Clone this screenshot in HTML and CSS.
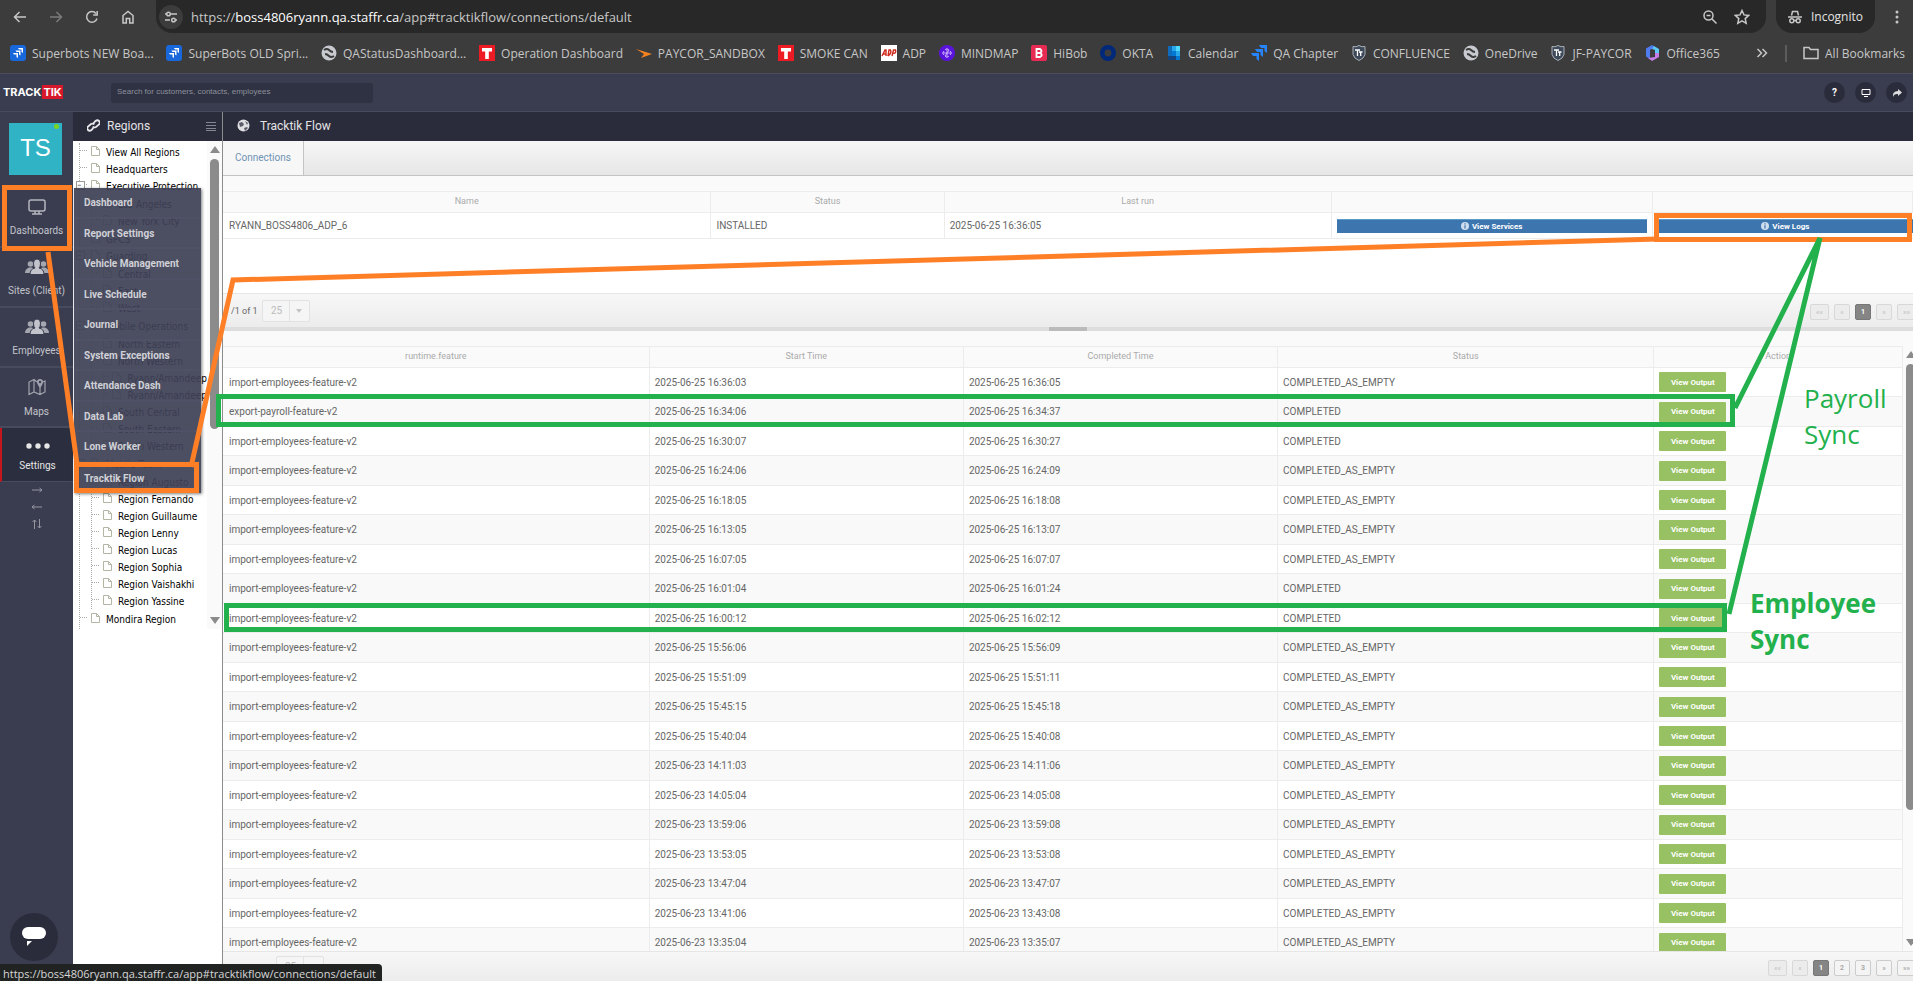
FILE: index.html
```html
<!DOCTYPE html>
<html lang="en">
<head>
    <meta charset="UTF-8">
    <meta name="viewport" content="width=device-width, initial-scale=1.0">
    <title>Tracktik Flow</title>
    <link rel="stylesheet" href="styles.css">
</head>
<body>
    <!-- shared icons -->
    <svg class="defs" aria-hidden="true">
        <symbol id="i-file" viewBox="0 0 9 10"><path d="M.5.5h5l3 3v6h-8zM5.5.5v3h3" fill="#fff" stroke="#b5b5a5"/></symbol>
        <symbol id="i-jira" viewBox="0 0 16 16"><rect width="16" height="16" rx="3" fill="#1868db"/><path d="M8 3h5v5l-1.500-1V4.600H9zM5.500 5.500h5v5L9 9.500V7H6.500zM3 8h5v5l-1.500-1V9.600H4z" fill="#fff"/></symbol>
        <symbol id="i-globe" viewBox="0 0 16 16"><circle cx="8" cy="8" r="7.500" fill="#c7cace"/><path d="M3 5q3-2 5 0t4 2M13 11q-3 2-5 0t-4-2" fill="none" stroke="#3c3c3c" stroke-width="2"/></symbol>
        <symbol id="i-t" viewBox="0 0 16 16"><rect width="16" height="16" fill="#ed1c24"/><path d="M3 3h10v3.500H9.800V14H6.200V6.500H3z" fill="#fff"/></symbol>
        <symbol id="i-shield" viewBox="0 0 16 16"><path d="M2 1.500q3 1 6-1 3 2 6 1v8q-1 4-6 6-5-2-6-6z" fill="#3e4a59" stroke="#a9b0b8"/><path d="M4 5h5M6.500 5v6M8 7h3.500M9.700 7v4" stroke="#fff" stroke-width="1.300" fill="none"/></symbol>
        <symbol id="i-people" viewBox="0 0 24 16"><g fill="#a5a7b0"><circle cx="5.500" cy="5" r="2.800"/><path d="M0 14q0-4 4-5.500h3q2 1 2 5.500z"/><circle cx="18.500" cy="5" r="2.800"/><path d="M24 14q0-4-4-5.500h-3q-2 1-2 5.500z"/></g><path d="M8.500 4q0-4 3.500-4t3.500 4-1.500 5q5 1 5 6.500H5Q5 10 10 9 8.500 8 8.500 4z" fill="#c3c4cb" stroke="#3a3d50"/></symbol>
        <symbol id="i-info" viewBox="0 0 8 8"><circle cx="4" cy="4" r="4" fill="#cfdded"/><path d="M4 1.300v1.200M4 3.300v3.200" stroke="#3d75af" stroke-width="1.200"/></symbol>
    </svg>

    <header class="browser">
        <div class="toolbar">
            <button class="tool" aria-label="Back"><svg width="16" height="16" viewBox="0 0 16 16"><path d="M14 8H3M7.500 3L2.500 8l5 5" class="line"/></svg></button>
            <button class="tool dim" aria-label="Forward"><svg width="16" height="16" viewBox="0 0 16 16"><path d="M2 8h11M8.500 3l5 5-5 5" class="line"/></svg></button>
            <button class="tool" aria-label="Reload"><svg width="16" height="16" viewBox="0 0 16 16"><path d="M13 9.500A5.300 5.300 0 1 1 12 4.500M13.200 2v4H9.200" class="line"/></svg></button>
            <button class="tool" aria-label="Home"><svg width="16" height="16" viewBox="0 0 16 16"><path d="M3 14V6.500L8 2.500l5 4V14H9.700V9.500H6.300V14z" class="line"/></svg></button>
            <div class="address">
                <span class="site-info"><svg width="14" height="14" viewBox="0 0 14 14"><path d="M1 4h1M7 4h6M1 10h5M12 10h1" class="line"/><circle cx="4.500" cy="4" r="1.800" class="line"/><circle cx="9.500" cy="10" r="1.800" class="line"/></svg></span>
                <span class="url">https://<b>boss4806ryann.qa.staffr.ca</b>/app#tracktikflow/connections/default</span>
                <svg width="16" height="16" viewBox="0 0 16 16"><circle cx="6.500" cy="6.500" r="4.500" class="line"/><path d="M10 10l4.500 4.500M4.500 6.500h4" class="line"/></svg>
                <svg class="star" width="16" height="16" viewBox="0 0 16 16"><path d="M8 1.500l2 4.400 4.700.5-3.500 3.200 1 4.700L8 11.900l-4.200 2.400 1-4.700L1.300 6.400 6 5.900z" class="line"/></svg>
            </div>
            <span class="incognito"><svg width="14" height="14" viewBox="0 0 14 14"><path d="M3.500 5.500l1-4h5l1 4M0 7h14" class="line"/><circle cx="3.800" cy="10.800" r="2" class="line"/><circle cx="10.200" cy="10.800" r="2" class="line"/><path d="M5.800 10.500h2.400" class="line"/></svg>Incognito</span>
            <button class="tool more" aria-label="Menu"><svg width="4" height="16" viewBox="0 0 4 16" fill="#c7c7c7"><circle cx="2" cy="3" r="1.500"/><circle cx="2" cy="8" r="1.500"/><circle cx="2" cy="13" r="1.500"/></svg></button>
        </div>
        <nav class="bookmarks">
            <div class="bookmark-list">
                <a href="#"><svg><use href="#i-jira"/></svg>Superbots NEW Boa...</a>
                <a href="#"><svg><use href="#i-jira"/></svg>SuperBots OLD Spri...</a>
                <a href="#"><svg><use href="#i-globe"/></svg>QAStatusDashboard...</a>
                <a href="#"><svg><use href="#i-t"/></svg>Operation Dashboard</a>
                <a href="#"><svg viewBox="0 0 16 16"><path d="M0 4l16 5-11 4 3-4z" fill="#f58220"/></svg>PAYCOR_SANDBOX</a>
                <a href="#"><svg><use href="#i-t"/></svg>SMOKE CAN</a>
                <a href="#"><svg viewBox="0 0 16 16"><path d="M0 0h16v16H0z" fill="#fff"/><path d="M1 11l3-6h1v6M2.500 9H5M7 11l1-6h1.500q1.500 3-2.500 6M11 11l1.500-6h2q1 3-2 3.500" fill="none" stroke="#d0271d" stroke-width="1.400"/></svg>ADP</a>
                <a href="#"><svg viewBox="0 0 16 16"><circle cx="8" cy="8" r="8" fill="#5a13dc"/><path d="M8 4v8M4 8h8M6 5q2-3 4 0L6 11q2 3 4 0M5 6q-3 2 0 4M11 6q3 2 0 4" fill="none" stroke="#c9aefc"/></svg>MINDMAP</a>
                <a href="#"><svg viewBox="0 0 16 16"><rect width="16" height="16" rx="2" fill="#e72b53"/><path d="M5.500 4H9q3 2 0 4 3.500 2 0 4H5.500zM5.500 8H9" fill="none" stroke="#fff" stroke-width="1.800"/></svg>HiBob</a>
                <a href="#"><svg viewBox="0 0 16 16"><circle cx="8" cy="8" r="5.700" fill="none" stroke="#00297a" stroke-width="4.600"/></svg>OKTA</a>
                <a href="#"><svg viewBox="0 0 16 16"><path d="M2 1h4v14H2z" fill="#0f6cbd"/><path d="M6 1h4v5H6z" fill="#28a8ea"/><path d="M10 1h4v5h-4z" fill="#50d9ff"/><path d="M6 6h4v5H6z" fill="#0078d4"/><path d="M10 6h4v5h-4z" fill="#28a8ea"/><path d="M2 11h8v4H2z" fill="#14447d"/><path d="M10 11h4v4h-4z" fill="#0078d4"/></svg>Calendar</a>
                <a href="#"><svg viewBox="0 0 16 16"><path d="M8 0h8v8l-2.500-2V3H10zM4 4h8v8l-2.500-2V7H6zM0 8h8v8l-2.500-2v-3H2z" fill="#2684ff"/></svg>QA Chapter</a>
                <a href="#"><svg><use href="#i-shield"/></svg>CONFLUENCE</a>
                <a href="#"><svg><use href="#i-globe"/></svg>OneDrive</a>
                <a href="#"><svg><use href="#i-shield"/></svg>JF-PAYCOR</a>
                <a href="#"><svg viewBox="0 0 16 16"><path d="M8 0L2 3.500v8L6 14V5l5-3z" fill="#4f7df0"/><path d="M10 1l5 3v5l-4-1V5L8 4z" fill="#5cc8f7"/><path d="M15 8v4l-7 4-4-3 7-1V8z" fill="#c57be8"/></svg>Office365</a>
            </div>
            <svg class="chevrons" viewBox="0 0 12 12"><path d="M1.500 2l4 4-4 4M6.500 2l4 4-4 4" class="line"/></svg>
            <a class="all" href="#"><svg viewBox="0 0 16 16"><path d="M1 13.500v-11h5l1.500 2H15v9z" class="line"/></svg>All Bookmarks</a>
        </nav>
    </header>

    <div class="topbar">
        <div class="logo">TRACK<span>TIK</span></div>
        <input class="search" type="text" aria-label="Search" placeholder="Search for customers, contacts, employees">
        <div class="top-actions">
            <button aria-label="Help">?</button>
            <button aria-label="Screen"><svg width="10" height="10" viewBox="0 0 10 10"><path d="M1 1.500h8v5H1zM3 8.500h4" fill="none" stroke="#fff"/></svg></button>
            <button aria-label="Share"><svg width="10" height="10" viewBox="0 0 10 10"><path d="M6 1l4 3.500L6 8V6Q2 5.500 1 9 0 3.500 6 3z" fill="#ddd"/></svg></button>
        </div>
    </div>

    <div class="app">
        <nav class="sidebar">
            <div class="avatar">TS<i></i></div>
            <a class="side-item" href="#"><svg width="18" height="16" viewBox="0 0 18 16"><rect x="1" y="1" width="16" height="11" rx="2" fill="none" stroke="#b4b6bf" stroke-width="1.500"/><path d="M7 12v2.500M11 12v2.500M4 15h10" stroke="#b4b6bf" stroke-width="1.500"/></svg>Dashboards</a>
            <a class="side-item" href="#"><svg width="24" height="16"><use href="#i-people"/></svg>Sites (Client)</a>
            <a class="side-item" href="#"><svg width="24" height="16"><use href="#i-people"/></svg>Employees</a>
            <a class="side-item" href="#"><svg width="18" height="18" viewBox="0 0 18 18"><path d="M9 4L6 1.500 1 4v12.500l5-2.500 6 2.500 5-2.500V3l-2 1M6 1.500V14M12 9v7.500" fill="none" stroke="#a0a2ad" stroke-width="1.200"/><path d="M12 10Q9 6 9 4a3 3 0 0 1 6 0q0 2-3 6z" fill="#a0a2ad"/><circle cx="12" cy="4" r="1.200" fill="#3a3d50"/></svg>Maps</a>
            <a class="side-item active" href="#"><svg width="24" height="8" viewBox="0 0 24 8" fill="#e6e6e6"><circle cx="3" cy="4" r="2.700"/><circle cx="12" cy="4" r="2.700"/><circle cx="21" cy="4" r="2.700"/></svg>Settings</a>
            <div class="arrows">
                <svg width="12" height="10" viewBox="0 0 12 10"><path d="M1 5h10M8.500 3L11 5 8.500 7"/></svg>
                <svg width="12" height="10" viewBox="0 0 12 10"><path d="M11 5H1M3.500 3L1 5l2.500 2"/></svg>
                <svg width="12" height="10" viewBox="0 0 12 10"><path d="M3.500 10V1M1.500 3l2-2 2 2M8.500 0v9M6.500 7l2 2 2-2"/></svg>
            </div>
            <button class="chat" aria-label="Chat"><svg width="26" height="22" viewBox="0 0 26 22" fill="#fff"><rect x="1" y="1" width="24" height="12" rx="6"/><path d="M6 15h5l-5 5z"/></svg></button>
            <div class="menu">
                <a href="#">Dashboard</a>
                <a href="#">Report Settings</a>
                <a href="#">Vehicle Management</a>
                <a href="#">Live Schedule</a>
                <a href="#">Journal</a>
                <a href="#">System Exceptions</a>
                <a href="#">Attendance Dash</a>
                <a href="#">Data Lab</a>
                <a href="#">Lone Worker</a>
                <a href="#">Tracktik Flow</a>
            </div>
        </nav>

        <aside class="regions">
            <h2 class="panel-title"><svg width="13" height="13" viewBox="0 0 13 13"><path d="M6 5l2.500-3q2-1.500 3.500 0t0 3.500L9 8Q7 9 5.800 7.500M7 8l-2.500 3q-2 1.500-3.500 0T1 7.500L4 5q2-1 3.200.5" fill="none" stroke="#e8e8ec" stroke-width="1.800"/></svg>Regions<svg class="burger" width="10" height="10" viewBox="0 0 10 10"><path d="M0 1.500h10M0 4.500h10M0 7.500h10M0 9.500h10" stroke="#85868f"/></svg></h2>
            <div class="tree-box">
                <ul class="tree">
                    <li><a><svg><use href="#i-file"/></svg>View All Regions</a></li>
                    <li><a><svg><use href="#i-file"/></svg>Headquarters</a></li>
                    <li><a class="open"><svg><use href="#i-file"/></svg>Executive Protection</a>
                        <ul>
                            <li><a><svg><use href="#i-file"/></svg>Los Angeles</a></li>
                            <li><a><svg><use href="#i-file"/></svg>New York City</a></li>
                        </ul>
                    </li>
                    <li><a><svg><use href="#i-file"/></svg>GPCS</a></li>
                    <li><a class="open"><svg><use href="#i-file"/></svg>Guarding</a>
                        <ul>
                            <li><a><svg><use href="#i-file"/></svg>Central</a></li>
                            <li><a><svg><use href="#i-file"/></svg>East</a></li>
                            <li><a><svg><use href="#i-file"/></svg>West</a></li>
                        </ul>
                    </li>
                    <li><a class="open"><svg><use href="#i-file"/></svg>Mobile Operations</a>
                        <ul>
                            <li><a><svg><use href="#i-file"/></svg>North Eastern</a></li>
                            <li><a><svg><use href="#i-file"/></svg>North Western</a>
                                <ul>
                                    <li><a><svg><use href="#i-file"/></svg>Ryann/Amandeep</a></li>
                                    <li><a><svg><use href="#i-file"/></svg>Ryann/Amandeep</a></li>
                                </ul>
                            </li>
                            <li><a><svg><use href="#i-file"/></svg>South Central</a></li>
                            <li><a><svg><use href="#i-file"/></svg>South Eastern</a></li>
                            <li><a><svg><use href="#i-file"/></svg>South Western</a></li>
                        </ul>
                    </li>
                    <li><a class="open"><svg><use href="#i-file"/></svg>Mobile Team</a>
                        <ul>
                            <li><a><svg><use href="#i-file"/></svg>Region Augusto</a></li>
                            <li><a><svg><use href="#i-file"/></svg>Region Fernando</a></li>
                            <li><a><svg><use href="#i-file"/></svg>Region Guillaume</a></li>
                            <li><a><svg><use href="#i-file"/></svg>Region Lenny</a></li>
                            <li><a><svg><use href="#i-file"/></svg>Region Lucas</a></li>
                            <li><a><svg><use href="#i-file"/></svg>Region Sophia</a></li>
                            <li><a><svg><use href="#i-file"/></svg>Region Vaishakhi</a></li>
                            <li><a><svg><use href="#i-file"/></svg>Region Yassine</a></li>
                        </ul>
                    </li>
                    <li><a><svg><use href="#i-file"/></svg>Mondira Region</a></li>
                </ul>
                <div class="scroll"><i class="up"></i><i class="thumb tree-thumb"></i><i class="down"></i></div>
            </div>
        </aside>

        <main class="main">
            <h1 class="panel-title"><svg width="13" height="13" viewBox="0 0 13 13"><circle cx="6.500" cy="6.500" r="6" fill="#e0e0e4"/><path d="M2 4l3-1 2 2-1 2-3 1zM8 2l3 2-1 2M7 9l3-1 1 1-3 3z" fill="#5b5c68"/></svg>Tracktik Flow</h1>
            <div class="tabs"><a href="#">Connections</a></div>

            <section class="connections">
                <table class="grid">
                    <colgroup><col class="c-name"><col class="c-state"><col class="c-run"><col class="c-services"><col></colgroup>
                    <thead><tr><th>Name</th><th>Status</th><th>Last run</th><th></th><th></th></tr></thead>
                    <tbody>
                        <tr>
                            <td>RYANN_BOSS4806_ADP_6</td><td>INSTALLED</td><td>2025-06-25 16:36:05</td>
                            <td><button class="btn-blue"><svg width="8" height="8"><use href="#i-info"/></svg>View Services</button></td>
                            <td><button class="btn-blue"><svg width="8" height="8"><use href="#i-info"/></svg>View Logs</button></td>
                        </tr>
                    </tbody>
                </table>
            </section>
            <div class="foot">
                <span class="count">/1 of 1</span>
                <label class="page-size"><select aria-label="Rows per page"><option>25</option></select></label>
                <div class="pager"><button disabled>««</button><button disabled>«</button><button class="on">1</button><button disabled>»</button><button disabled>»»</button></div>
            </div>
            <div class="splitter"><i></i></div>

            <section class="runs">
                <table class="grid">
                    <colgroup><col class="c-feature"><col class="c-time"><col class="c-time"><col class="c-status"><col></colgroup>
                    <thead><tr><th>runtime.feature</th><th>Start Time</th><th>Completed Time</th><th>Status</th><th>Action</th></tr></thead>
                    <tbody>
                        <tr><td>import-employees-feature-v2</td><td>2025-06-25 16:36:03</td><td>2025-06-25 16:36:05</td><td>COMPLETED_AS_EMPTY</td><td><button class="btn-green">View Output</button></td></tr>
                        <tr><td>export-payroll-feature-v2</td><td>2025-06-25 16:34:06</td><td>2025-06-25 16:34:37</td><td>COMPLETED</td><td><button class="btn-green">View Output</button></td></tr>
                        <tr><td>import-employees-feature-v2</td><td>2025-06-25 16:30:07</td><td>2025-06-25 16:30:27</td><td>COMPLETED</td><td><button class="btn-green">View Output</button></td></tr>
                        <tr><td>import-employees-feature-v2</td><td>2025-06-25 16:24:06</td><td>2025-06-25 16:24:09</td><td>COMPLETED_AS_EMPTY</td><td><button class="btn-green">View Output</button></td></tr>
                        <tr><td>import-employees-feature-v2</td><td>2025-06-25 16:18:05</td><td>2025-06-25 16:18:08</td><td>COMPLETED_AS_EMPTY</td><td><button class="btn-green">View Output</button></td></tr>
                        <tr><td>import-employees-feature-v2</td><td>2025-06-25 16:13:05</td><td>2025-06-25 16:13:07</td><td>COMPLETED_AS_EMPTY</td><td><button class="btn-green">View Output</button></td></tr>
                        <tr><td>import-employees-feature-v2</td><td>2025-06-25 16:07:05</td><td>2025-06-25 16:07:07</td><td>COMPLETED_AS_EMPTY</td><td><button class="btn-green">View Output</button></td></tr>
                        <tr><td>import-employees-feature-v2</td><td>2025-06-25 16:01:04</td><td>2025-06-25 16:01:24</td><td>COMPLETED</td><td><button class="btn-green">View Output</button></td></tr>
                        <tr><td>import-employees-feature-v2</td><td>2025-06-25 16:00:12</td><td>2025-06-25 16:02:12</td><td>COMPLETED</td><td><button class="btn-green">View Output</button></td></tr>
                        <tr><td>import-employees-feature-v2</td><td>2025-06-25 15:56:06</td><td>2025-06-25 15:56:09</td><td>COMPLETED_AS_EMPTY</td><td><button class="btn-green">View Output</button></td></tr>
                        <tr><td>import-employees-feature-v2</td><td>2025-06-25 15:51:09</td><td>2025-06-25 15:51:11</td><td>COMPLETED_AS_EMPTY</td><td><button class="btn-green">View Output</button></td></tr>
                        <tr><td>import-employees-feature-v2</td><td>2025-06-25 15:45:15</td><td>2025-06-25 15:45:18</td><td>COMPLETED_AS_EMPTY</td><td><button class="btn-green">View Output</button></td></tr>
                        <tr><td>import-employees-feature-v2</td><td>2025-06-25 15:40:04</td><td>2025-06-25 15:40:08</td><td>COMPLETED_AS_EMPTY</td><td><button class="btn-green">View Output</button></td></tr>
                        <tr><td>import-employees-feature-v2</td><td>2025-06-23 14:11:03</td><td>2025-06-23 14:11:06</td><td>COMPLETED_AS_EMPTY</td><td><button class="btn-green">View Output</button></td></tr>
                        <tr><td>import-employees-feature-v2</td><td>2025-06-23 14:05:04</td><td>2025-06-23 14:05:08</td><td>COMPLETED_AS_EMPTY</td><td><button class="btn-green">View Output</button></td></tr>
                        <tr><td>import-employees-feature-v2</td><td>2025-06-23 13:59:06</td><td>2025-06-23 13:59:08</td><td>COMPLETED_AS_EMPTY</td><td><button class="btn-green">View Output</button></td></tr>
                        <tr><td>import-employees-feature-v2</td><td>2025-06-23 13:53:05</td><td>2025-06-23 13:53:08</td><td>COMPLETED_AS_EMPTY</td><td><button class="btn-green">View Output</button></td></tr>
                        <tr><td>import-employees-feature-v2</td><td>2025-06-23 13:47:04</td><td>2025-06-23 13:47:07</td><td>COMPLETED_AS_EMPTY</td><td><button class="btn-green">View Output</button></td></tr>
                        <tr><td>import-employees-feature-v2</td><td>2025-06-23 13:41:06</td><td>2025-06-23 13:43:08</td><td>COMPLETED_AS_EMPTY</td><td><button class="btn-green">View Output</button></td></tr>
                        <tr><td>import-employees-feature-v2</td><td>2025-06-23 13:35:04</td><td>2025-06-23 13:35:07</td><td>COMPLETED_AS_EMPTY</td><td><button class="btn-green">View Output</button></td></tr>
                    </tbody>
                </table>
                <div class="scroll runs-scroll"><i class="up"></i><i class="thumb"></i><i class="down"></i></div>
            </section>
            <div class="foot foot-bottom">
                <label class="page-size"><select aria-label="Rows per page"><option>25</option></select></label>
                <div class="pager"><button disabled>««</button><button disabled>«</button><button class="on">1</button><button>2</button><button>3</button><button>»</button><button>»»</button></div>
            </div>
        </main>
    </div>

    <div class="status-url">https://boss4806ryann.qa.staffr.ca/app#tracktikflow/connections/default</div>

    <!-- notes drawn over the page -->
    <svg class="notes" width="1913" height="981" viewBox="0 0 1913 981">
        <g class="orange">
            <rect x="4.500" y="187.500" width="65" height="61"/>
            <rect x="76.500" y="464.500" width="120" height="26"/>
            <rect x="1656.500" y="215.500" width="253" height="24"/>
            <path d="M48 252L77 464M191 467L233 280L1658 239"/>
        </g>
        <g class="green">
            <rect x="218.500" y="396.500" width="1514" height="28"/>
            <rect x="226.500" y="605.500" width="1498" height="24"/>
            <path d="M1735 408L1820 238L1729 614"/>
        </g>
    </svg>
    <div class="note payroll">Payroll<br>Sync</div>
    <div class="note employee">Employee<br>Sync</div>
</body>
</html>
```
FILE: styles.css
```css
* {
    box-sizing: border-box;
}

body {
    margin: 0;
    height: 100vh;
    overflow: hidden;
    position: relative;
    display: flex;
    flex-direction: column;
    font-family: Roboto, "Liberation Sans", sans-serif;
    font-size: 10px;
    color: #666;
    background: #fff;
}

a {
    color: inherit;
    text-decoration: none;
}

button {
    border: 0;
    padding: 0;
    margin: 0;
    background: none;
    font-family: inherit;
}

ul {
    list-style: none;
    margin: 0;
    padding: 0;
}

.defs {
    position: absolute;
    width: 0;
    height: 0;
}

/* browser bars */
.browser {
    background: #3c3c3c;
    color: #c7c7c7;
    font-family: "Open Sans", "Noto Sans", sans-serif;
    font-size: 12px;
    border-bottom: 1px solid #4a4d5c;
}

.line {
    fill: none;
    stroke: #c7c7c7;
    stroke-width: 1.5;
}

.toolbar {
    display: flex;
    align-items: center;
    height: 33px;
    padding-left: 12px;
}

.tool {
    width: 36px;
    height: 16px;
    text-align: left;
}

.tool svg {
    display: block;
}

.dim {
    opacity: 0.45;
}

.address {
    flex: 1;
    display: flex;
    align-items: center;
    height: 33px;
    padding: 0 16px 0 3px;
    background: #282828;
    border-radius: 0 0 16px 16px;
}

.site-info {
    display: flex;
    align-items: center;
    justify-content: center;
    width: 24px;
    height: 24px;
    border-radius: 50%;
    background: #3c3c3c;
}

.url {
    flex: 1;
    margin-left: 8px;
    font-size: 13px;
}

.url b {
    font-weight: normal;
    color: #fff;
}

.star {
    margin-left: 16px;
}

.incognito {
    display: flex;
    align-items: center;
    gap: 9px;
    height: 33px;
    margin-left: 10px;
    padding: 0 12px;
    border-radius: 0 0 16px 16px;
    background: #282828;
    color: #e3e3e3;
}

.more {
    width: 38px;
    padding-left: 20px;
}

.bookmarks {
    display: flex;
    align-items: center;
    height: 40px;
    padding: 0 8px 0 10px;
}

.bookmarks a {
    display: flex;
    align-items: center;
    gap: 6px;
    white-space: nowrap;
}

.bookmarks svg {
    width: 16px;
    height: 16px;
}

.bookmark-list {
    flex: 1;
    display: flex;
    justify-content: space-between;
}

.bookmarks .chevrons {
    width: 12px;
    height: 12px;
    margin: 0 17px 0 36px;
}

.bookmarks .all {
    border-left: 2px solid #5c5c5c;
    padding-left: 16px;
}

/* app header */
.topbar {
    display: flex;
    align-items: center;
    height: 38px;
    padding: 0 6px 0 3px;
    background: #3a3d50;
    border-bottom: 1px solid #484b5e;
}

.logo {
    width: 108px;
    color: #fff;
    font-family: Inter, Roboto, sans-serif;
    font-size: 11px;
    font-weight: 700;
    line-height: 9px;
}

.logo span {
    margin-left: 1px;
    padding: 0 1px;
    background: #d7182a;
}

.search {
    width: 262px;
    height: 20px;
    padding: 0 6px 2px;
    border: 0;
    border-radius: 3px;
    background: #2f3243;
    color: #9a9ba5;
    font-family: "Liberation Sans", sans-serif;
    font-size: 8px;
}

.search::placeholder {
    color: #8d8f9a;
}

.top-actions {
    display: flex;
    gap: 10px;
    margin-left: auto;
}

.top-actions button {
    display: flex;
    align-items: center;
    justify-content: center;
    width: 21px;
    height: 21px;
    border-radius: 50%;
    background: #2b2c3b;
    color: #fff;
    font-size: 10px;
    font-weight: 700;
}

.app {
    flex: 1;
    min-height: 0;
    display: flex;
}

/* left navigation */
.sidebar {
    position: relative;
    z-index: 2;
    display: flex;
    flex-direction: column;
    width: 73px;
    background: #3a3d50;
}

.avatar {
    position: relative;
    width: 53px;
    height: 52px;
    margin: 11px 9px 13px;
    background: #2fb3c5;
    color: #fff;
    font-family: "Liberation Sans", sans-serif;
    font-size: 24px;
    line-height: 50px;
    text-align: center;
}

.avatar i {
    position: absolute;
    top: 1px;
    right: 3px;
    width: 5px;
    height: 5px;
    border-radius: 50%;
    background: #7ed321;
}

.side-item {
    display: flex;
    flex-direction: column;
    align-items: center;
    justify-content: center;
    gap: 10px;
    height: 60px;
    border-bottom: 2px solid #484b5e;
    color: #c3c4cb;
    white-space: nowrap;
}

.active {
    height: 54px;
    padding-top: 4px;
    background: #2b2e3e;
    border-left: 2px solid #c4161c;
    border-bottom-width: 1px;
    color: #e6e6e6;
}

.arrows {
    display: flex;
    flex-direction: column;
    align-items: center;
    gap: 7px;
    padding-top: 3px;
    fill: none;
    stroke: #9597a3;
}

.chat {
    display: flex;
    align-items: center;
    justify-content: center;
    width: 48px;
    height: 48px;
    margin: auto 0 20px 10px;
    border-radius: 50%;
    background: #2b2c3b;
}

.menu {
    position: absolute;
    left: 74px;
    top: 76px;
    width: 127px;
    background: rgba(62, 65, 86, 0.93);
    color: #d0d1d6;
    font-weight: 700;
    box-shadow: 1px 1px 3px rgba(0, 0, 0, 0.5);
}

.menu a {
    display: flex;
    align-items: center;
    height: 31px;
    padding-left: 10px;
    border-bottom: 2px solid #4f5266;
}

.menu a:nth-child(even) {
    height: 30px;
}

.menu a:last-child {
    border-bottom: 0;
}

/* region tree */
.regions {
    display: flex;
    flex-direction: column;
    width: 150px;
    border-right: 1px solid #8c8c8c;
}

.panel-title {
    display: flex;
    align-items: center;
    gap: 7px;
    height: 29px;
    margin: 0;
    padding: 0 6px 2px 14px;
    background: #2b2c3b;
    color: #e3e3e6;
    font-size: 12px;
    font-weight: 400;
}

.burger {
    margin-left: auto;
}

.tree-box {
    display: flex;
    height: 488px;
}

.tree {
    flex: 1;
    min-width: 0;
    margin: 2px 0 0 6px;
    border-left: 1px dotted #aaa;
    color: #000;
    font-family: "DejaVu Sans Condensed", "DejaVu Sans", sans-serif;
    font-size: 10px;
}

.tree a {
    position: relative;
    display: flex;
    align-items: center;
    height: 17px;
    padding-top: 2px;
    white-space: nowrap;
}

.tree a::before {
    content: "";
    width: 7px;
    margin: 0 4px 4px 0;
    border-top: 1px dotted #aaa;
}

.tree .open::after {
    content: "−";
    position: absolute;
    left: -4px;
    top: 4px;
    width: 7px;
    height: 7px;
    border: 1px solid #999;
    background: #fff;
    font-size: 6px;
    line-height: 5px;
}

.tree svg {
    width: 9px;
    height: 10px;
    margin: 0 6px 4px 0;
    flex: none;
}

.tree ul {
    margin-left: 11px;
    border-left: 1px dotted #aaa;
}

.tree > li > ul {
    margin-top: 1px;
    margin-bottom: 1px;
}

.scroll {
    display: flex;
    flex-direction: column;
    align-items: center;
    width: 15px;
    padding: 5px 0;
    background: #fafafa;
}

.up,
.down {
    border: 5px solid transparent;
}

.up {
    border-top: 0;
    border-bottom: 7px solid #8b8b8b;
}

.down {
    border-bottom: 0;
    border-top: 7px solid #8b8b8b;
    margin-top: auto;
}

.thumb {
    width: 9px;
    margin-top: 6px;
    border-radius: 5px;
    background: #8b8b8b;
}

.tree-thumb {
    height: 270px;
}

/* content */
.main {
    flex: 1;
    min-width: 0;
    display: flex;
    flex-direction: column;
    background: #fafafa;
}

.main .panel-title {
    gap: 10px;
}

.tabs {
    display: flex;
    height: 35px;
    background: linear-gradient(#f6f6f6, #e6e6e6);
    border-bottom: 1px solid #c4c4c4;
}

.tabs a {
    padding: 0 12px;
    border-right: 1px solid #c4c4c4;
    background: #f7f7f7;
    color: #6f93b3;
    line-height: 34px;
}

.connections {
    height: 102px;
    margin-top: 15px;
    background: #fff;
    overflow: hidden;
}

.grid {
    width: 100%;
    table-layout: fixed;
    border-collapse: separate;
    border-spacing: 0;
    border-top: 1px solid #ececec;
    background: #fff;
}

.grid th {
    height: 21px;
    padding: 0 0 2px;
    border-right: 1px solid #ececec;
    border-bottom: 1px solid #ececec;
    background: #fafafa;
    color: #aaa;
    font-size: 9px;
    font-weight: 400;
}

.grid td {
    height: 29px;
    padding: 0 5px;
    border-right: 1px solid #ececec;
    border-bottom: 1px solid #ececec;
}

.runs tr:nth-child(even) td {
    height: 30px;
    background: #f9f9f9;
}

.grid.grid tr td:first-child {
    padding-left: 6px;
}

.connections .grid td {
    height: 26px;
}

.connections .grid td:last-child {
    padding-right: 0;
    border-right: 0;
}

.c-name { width: 28.9%; }
.c-state { width: 13.8%; }
.c-run { width: 22.9%; }
.c-services { width: 19%; }
.c-feature { width: 25.4%; }
.c-time { width: 18.7%; }
.c-status { width: 22.4%; }

.btn-blue,
.btn-green {
    display: flex;
    align-items: center;
    justify-content: center;
    color: #fff;
    font-size: 8px;
    font-weight: 700;
}

.btn-blue {
    gap: 3px;
    width: 100%;
    height: 14px;
    background: #3d75af;
    border-top: 1px solid #5b9bc9;
}

.btn-green {
    width: 67px;
    height: 20px;
    border-radius: 1px;
    background: #97c163;
}

.foot {
    display: flex;
    align-items: center;
    height: 34px;
    padding-left: 8px;
    border-top: 1px solid #e6e6e6;
    background: linear-gradient(#f7f7f7, #ececec);
    font-size: 9px;
    overflow: hidden;
}

.count {
    width: 31px;
}

.page-size {
    position: relative;
    display: block;
    width: 48px;
    height: 22px;
    border: 1px solid #e2e2e2;
    border-radius: 2px;
    background: #f5f5f5;
}

.page-size::after {
    content: "";
    position: absolute;
    top: 8px;
    right: 7px;
    border: 3px solid transparent;
    border-top: 4px solid #c4c4c4;
    border-bottom: 0;
}

.page-size select {
    appearance: none;
    width: 27px;
    height: 20px;
    padding: 0 0 0 8px;
    border: 0;
    border-right: 1px solid #e2e2e2;
    background: none;
    color: #bbb;
    font-family: inherit;
    font-size: 10px;
}

.pager {
    display: flex;
    gap: 5px;
    margin: 0 -3px 0 auto;
    padding-top: 3px;
}

.pager button {
    width: 16px;
    height: 16px;
    border: 1px solid #ccc;
    border-radius: 2px;
    background: #f4f4f4;
    color: #aaa;
    font-size: 7px;
    font-weight: 700;
}

.pager button:first-child,
.pager button:last-child {
    width: 19px;
}

.pager button:disabled {
    border-color: #d8d8d8;
    background: #ececec;
    color: #c8c8c8;
}

.pager .on {
    border-color: #777;
    background: #858585;
    color: #fff;
}

.splitter {
    height: 4px;
    background: #ddd;
}

.splitter i {
    display: block;
    width: 38px;
    height: 4px;
    margin: 0 auto;
    background: #bbb;
}

.runs {
    flex: 1;
    min-height: 0;
    display: flex;
    align-items: flex-start;
    margin-top: 15px;
    overflow: hidden;
}

.runs .grid {
    flex: 1;
    width: auto;
}

.runs-scroll {
    align-self: stretch;
    width: 10px;
    padding: 5px 0 5px 3px;
    overflow: hidden;
    align-items: flex-start;
}

.runs-scroll .thumb {
    height: 75%;
}

.foot-bottom {
    height: 30px;
    padding-left: 53px;
}

/* link preview in the window corner */
.status-url {
    position: absolute;
    left: 0;
    bottom: 0;
    z-index: 3;
    height: 17px;
    padding: 0 6px 0 3px;
    border-radius: 0 4px 0 0;
    background: #212323;
    color: #d6d6d6;
    font-family: "Open Sans", "Noto Sans", sans-serif;
    font-size: 11px;
    line-height: 20px;
}

/* notes */
.notes {
    position: absolute;
    left: 0;
    top: 0;
    z-index: 4;
    fill: none;
    stroke-width: 5;
    pointer-events: none;
}

.orange {
    stroke: #ff7f27;
}

.green {
    stroke: #22b14c;
}

.note {
    position: absolute;
    z-index: 4;
    color: #22b14c;
    font-family: "Open Sans", "Noto Sans", sans-serif;
    font-size: 26px;
    font-weight: 500;
    line-height: 36px;
}

.payroll {
    left: 1804px;
    top: 380px;
}

.employee {
    left: 1750px;
    top: 585px;
    font-weight: 700;
}
```
